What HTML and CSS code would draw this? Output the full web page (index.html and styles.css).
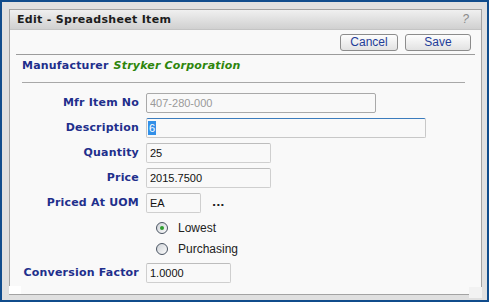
FILE: index.html
```html
<!DOCTYPE html>
<html lang="en">
<head>
    <meta charset="utf-8">
    <link rel="stylesheet" href="styles.css">
</head>
<body>
    <div class="dialog">
        <div class="panel">
            <div class="titlebar">
                <span class="title">Edit - Spreadsheet Item</span>
                <span class="help">?</span>
            </div>

            <div class="toolbar">
                <button class="btn btn-cancel">Cancel</button>
                <button class="btn btn-save">Save</button>
            </div>
            <div class="rule rule-top"></div>

            <div class="manufacturer">
                <span class="label">Manufacturer</span>
                <span class="maker">Stryker Corporation</span>
            </div>
            <div class="rule rule-sub"></div>

            <div class="form">
                <label class="label">Mfr Item No</label>
                <input class="field field-mfr" value="407-280-000" disabled>

                <label class="label">Description</label>
                <div class="field field-desc focused"><span class="selected">6</span></div>

                <label class="label">Quantity</label>
                <input class="field field-qty" value="25">

                <label class="label">Price</label>
                <input class="field field-qty" value="2015.7500">

                <label class="label">Priced At UOM</label>
                <div class="uom">
                    <input class="field field-uom" value="EA">
                    <span class="lookup">...</span>
                </div>

                <div class="radios">
                    <div class="radio-row"><span class="radio checked"></span>Lowest</div>
                    <div class="radio-row"><span class="radio"></span>Purchasing</div>
                </div>

                <label class="label">Conversion Factor</label>
                <input class="field field-conv" value="1.0000">
            </div>
        </div>

        <!-- resize handles -->
        <span class="grip grip-left"></span>
        <span class="grip grip-right"></span>
    </div>
</body>
</html>
```

FILE: styles.css
```css
* {
    margin: 0;
    padding: 0;
    box-sizing: border-box;
}
body {
    background-color: #e0e0e0;
}
.dialog {
    position: relative;
    width: 489px;
    height: 302px;
    border: 2px solid #104c8c;
    background-color: #e0e0e0;
    padding: 7px 5px 5px 7px;
}
.panel {
    height: 100%;
    border: 1px solid #a3a3a3;
    background-color: #f9f9f9;
    overflow: hidden;
}

/* title bar */
.titlebar {
    display: flex;
    justify-content: space-between;
    align-items: center;
    height: 20px;
    padding: 0 12px 1px 7px;
    background: linear-gradient(#f0f0f0, #d0d0d0);
    border-bottom: 1px solid #c4c4c4;
}
.title {
    font-family: "DejaVu Sans", Verdana, sans-serif;
    font-size: 11px;
    font-weight: bold;
    letter-spacing: 0.3px;
    color: #1c1c1c;
}
.help {
    font-family: "Liberation Sans", Arial, sans-serif;
    font-size: 12px;
    font-style: italic;
    color: #8a8a8a;
}

/* buttons */
.toolbar {
    display: flex;
    justify-content: flex-end;
    gap: 7px;
    padding: 4px 10px 0 0;
}
.btn {
    height: 17px;
    border: 1px solid #8c8c8c;
    border-radius: 3px;
    background: linear-gradient(#fdfdfd, #e2e2e2);
    font-family: "Liberation Sans", Arial, sans-serif;
    font-size: 12px;
    line-height: 15px;
    color: #1f3d99;
}
.btn-cancel {
    width: 58px;
}
.btn-save {
    width: 66px;
}

.rule {
    height: 1px;
    background-color: #9c9c9c;
}
.rule-top {
    margin: 3px 6px 0 6px;
}
.rule-sub {
    margin: 9px 16px 0 12px;
    background-color: #a8a8a8;
}

/* manufacturer line */
.manufacturer {
    margin-top: 2px;
    padding-left: 12px;
    line-height: 14px;
}
.label {
    font-family: "DejaVu Sans", Verdana, sans-serif;
    font-size: 11px;
    font-weight: bold;
    letter-spacing: 0.2px;
    color: #1f2f8c;
}
.maker {
    margin-left: 1px;
    font-family: "DejaVu Sans", Verdana, sans-serif;
    font-size: 11px;
    font-weight: bold;
    font-style: italic;
    letter-spacing: 0.2px;
    color: #2e860c;
}

/* form */
.form {
    display: grid;
    grid-template-columns: 129px auto;
    column-gap: 7px;
    row-gap: 5px;
    align-items: center;
    margin-top: 10px;
}
.form .label {
    text-align: right;
    line-height: 14px;
}
.field {
    height: 20px;
    padding: 0 3px;
    border: 1px solid #cfcfcf;
    border-top-color: #bdbdbd;
    border-radius: 2px;
    background-color: #f9f9f9;
    font-family: "Liberation Sans", Arial, sans-serif;
    font-size: 11px;
    color: #111;
    outline: none;
}
.field-mfr {
    width: 230px;
    border-color: #a9a9a9;
    color: #9a9a9a;
}
.field-desc {
    width: 280px;
    padding: 2px 1px 0;
    line-height: 14px;
}
.focused {
    border-color: #c8c8c8;
    border-top-color: #3b7cbd;
}
.selected {
    display: inline-block;
    padding: 0 1px;
    background-color: #3390e8;
    color: #fff;
}
.field-qty {
    width: 125px;
}
.field-uom {
    width: 55px;
}
.field-conv {
    width: 85px;
}
.uom {
    display: flex;
    align-items: center;
}
.lookup {
    margin-left: 11px;
    font-family: "DejaVu Sans", Verdana, sans-serif;
    font-size: 11px;
    font-weight: bold;
    line-height: 14px;
    color: #222;
}

/* radio group */
.radios {
    grid-column: 2;
    display: flex;
    flex-direction: column;
    gap: 1px;
    margin-bottom: -1px;
}
.radio-row {
    display: flex;
    align-items: center;
    height: 20px;
    padding-left: 10px;
    font-family: "Liberation Sans", Arial, sans-serif;
    font-size: 12px;
    color: #222;
}
.radio {
    position: relative;
    width: 12px;
    height: 12px;
    margin-right: 10px;
    border: 1px solid #4a5462;
    border-radius: 50%;
    background: linear-gradient(135deg, #cfd3d8, #fbfbfb);
}
.radio.checked::after {
    content: "";
    position: absolute;
    left: 3px;
    top: 3px;
    width: 4px;
    height: 4px;
    border-radius: 50%;
    background-color: #2f9e2f;
}

/* resize handles */
.grip {
    position: absolute;
}
.grip-left {
    left: 7px;
    top: 284px;
    width: 12px;
    height: 8px;
    background-color: #fff;
}
.grip-right {
    left: 467px;
    top: 285px;
    width: 13px;
    height: 11px;
    background-color: #f2f2f2;
}
```
